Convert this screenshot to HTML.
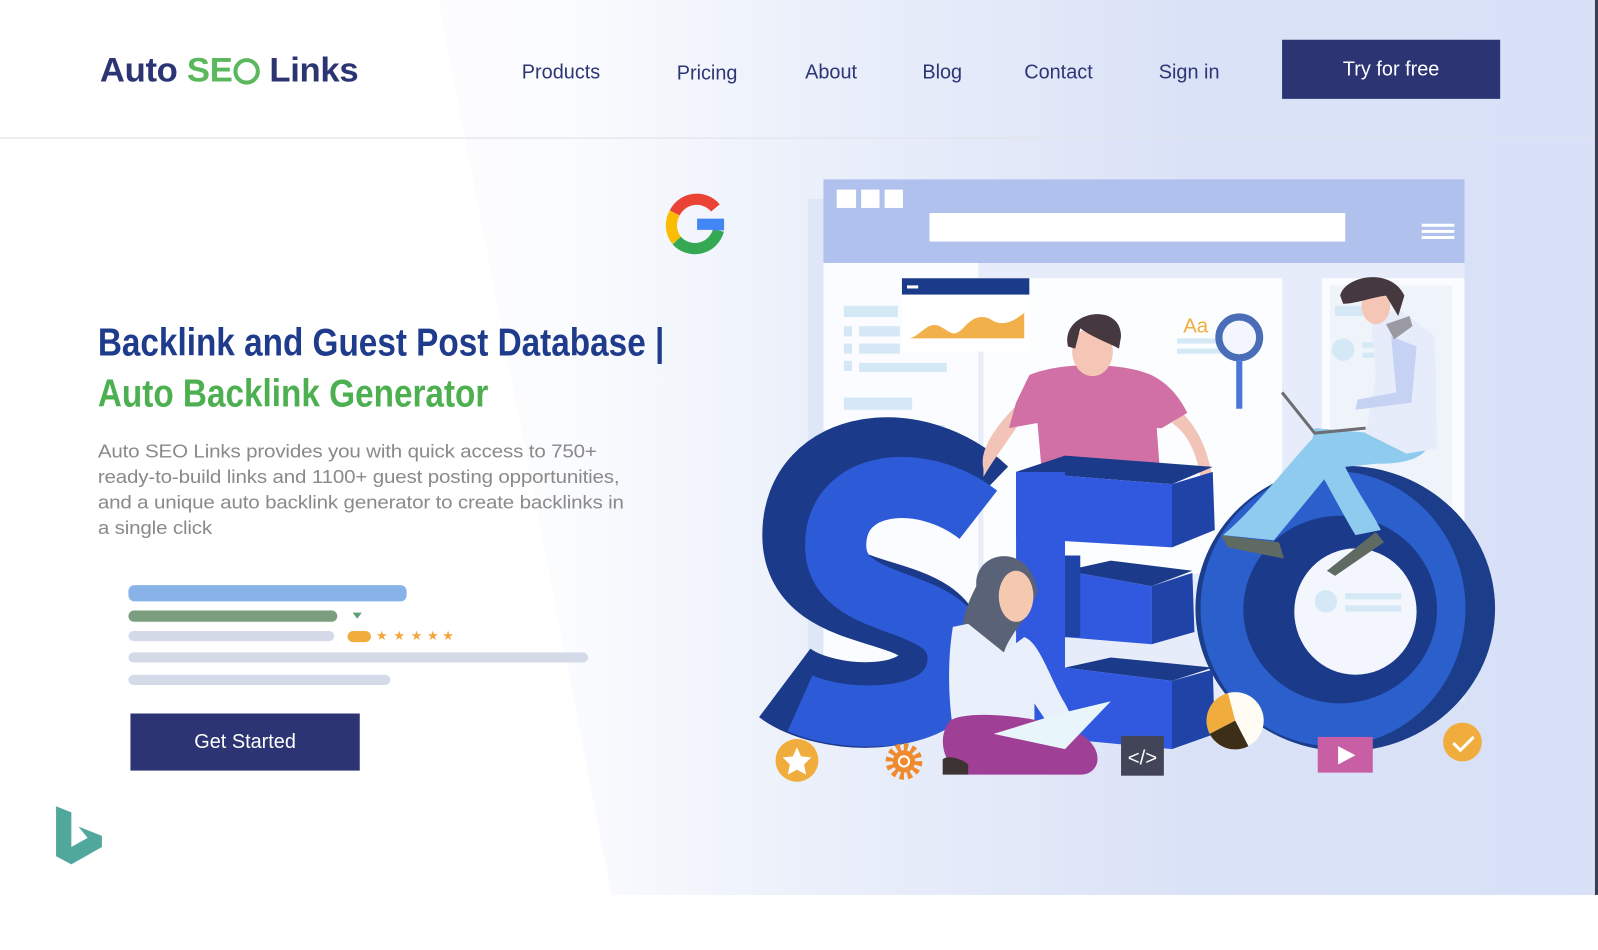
<!DOCTYPE html>
<html><head><meta charset="utf-8">
<style>
html,body{margin:0;padding:0;width:1598px;height:950px;overflow:hidden;background:#fff;}
#w{position:absolute;left:0;top:0;width:1568px;height:932px;transform:scale(1.01913,1.0193);transform-origin:0 0;font-family:"Liberation Sans",sans-serif;}
#bg{position:absolute;left:0;top:0;width:1565px;height:878px;background:linear-gradient(90deg,#fff 0%,#fbfcfe 35%,#eaeffa 52%,#dae2f7 75%,#d8e1f7 100%);}
#edge{position:absolute;left:1565px;top:0;width:3px;height:878px;background:#3a3f55;}
.nav{position:absolute;top:60px;font-size:19.5px;color:#2d3674;}
.btn{position:absolute;background:#2c3474;color:#fff;font-size:19.5px;display:flex;align-items:center;justify-content:center;}
h1{margin:0;position:absolute;left:96px;font-size:38px;font-weight:bold;white-space:nowrap;transform:scaleX(0.86);transform-origin:0 0;}
.p{position:absolute;left:96px;top:430px;font-size:18.5px;line-height:25px;color:#8a8a8a;white-space:nowrap;letter-spacing:-0.15px;transform:scaleX(1.09);transform-origin:0 0;}
.bar{position:absolute;border-radius:6px;}
</style></head><body>
<div id="w">
<div id="bg"></div>
<svg style="position:absolute;left:0;top:0" width="1568" height="932">
<polygon points="0,0 430,0 600,878 0,878" fill="#fff"/>
<line x1="0" y1="135.5" x2="1565" y2="135.5" stroke="#e2e4ea" stroke-width="1.2"/>
<g fill="none" stroke-width="11">
<path d="M702,204 A24,24 0 0 0 662,209" stroke="#ea4335"/>
<path d="M662,209 A24,24 0 0 0 664,236" stroke="#fbbc05"/>
<path d="M664,236 A24,24 0 0 0 705,226" stroke="#34a853"/>
<path d="M705,226 L705,220 L684,220" stroke="#4285f4"/>
</g>
<path d="M55,791 L70,797 L70,831 L86,822 L77,811 L100,820 L100,831 L70,848 L55,840 Z" fill="#4fa89b"/>
<rect x="793" y="195" width="20" height="470" fill="#dfe6f8"/>
<rect x="808" y="258" width="629" height="430" fill="#e6ecfa"/>
<rect x="808" y="176" width="629" height="82" fill="#afc1ec"/>
<rect x="821" y="186" width="19" height="18" fill="#fff"/><rect x="845" y="186" width="18" height="18" fill="#fff"/><rect x="868" y="186" width="18" height="18" fill="#fff"/>
<rect x="912" y="209" width="408" height="28" fill="#fff"/>
<g stroke="#fff" stroke-width="3"><line x1="1395" y1="221" x2="1427" y2="221"/><line x1="1395" y1="227" x2="1427" y2="227"/><line x1="1395" y1="233" x2="1427" y2="233"/></g>
<rect x="808" y="258" width="152" height="400" fill="#fbfcff"/>
<rect x="965" y="273" width="293" height="290" fill="#fcfdff"/>
<rect x="1297" y="273" width="140" height="300" fill="#fbfcff"/>
<rect x="1305" y="280" width="120" height="260" fill="#eef4fa"/>
<g fill="#d4e8f5"><rect x="828" y="300" width="53" height="11"/><rect x="828" y="320" width="8" height="10"/><rect x="843" y="320" width="40" height="10"/><rect x="828" y="337" width="8" height="10"/><rect x="843" y="337" width="40" height="10"/><rect x="828" y="354" width="8" height="10"/><rect x="843" y="356" width="86" height="9"/><rect x="828" y="390" width="67" height="12"/><rect x="828" y="417" width="9" height="8"/><rect x="845" y="417" width="82" height="8"/>
<rect x="1155" y="332" width="55" height="5"/><rect x="1155" y="342" width="55" height="5"/><rect x="1310" y="300" width="28" height="10"/><circle cx="1318" cy="343" r="11"/><rect x="1337" y="336" width="35" height="5"/><rect x="1337" y="346" width="35" height="5"/></g>
<rect x="885" y="273" width="125" height="72" fill="#fff"/>
<rect x="885" y="273" width="125" height="16" fill="#1a3a8a"/>
<rect x="890" y="280" width="11" height="3" fill="#fff"/>
<path d="M893,332 C905,328 910,315 922,320 C932,325 935,332 945,322 C955,310 965,308 975,315 C985,320 995,315 1005,307 L1005,332 Z" fill="#f2b04a"/>
<text x="1161" y="326" font-size="20" fill="#f0ad3d" font-family="Liberation Sans">Aa</text>
<circle cx="1216" cy="331" r="20" fill="#f3f6fd" stroke="#4a6db8" stroke-width="7"/>
<rect x="1213" y="353" width="6" height="48" fill="#4b76d8"/>
<ellipse cx="1320" cy="597" rx="147" ry="140" fill="#1b3d8a"/>
<ellipse cx="1308" cy="597" rx="130" ry="135" fill="#2b5fcb"/>
<ellipse cx="1315" cy="598" rx="95" ry="92" fill="#1b3a8a"/>
<ellipse cx="1330" cy="600" rx="60" ry="62" fill="#f3f7fd"/>
<circle cx="1301" cy="590" r="11" fill="#d4e8f5"/><rect x="1320" y="582" width="55" height="6" fill="#d4e8f5"/><rect x="1320" y="594" width="55" height="6" fill="#d4e8f5"/>
<path d="M960,488 C900,430 790,440 790,525 C790,610 930,575 925,645 C920,705 810,700 770,670" fill="none" stroke="#1b3a8a" stroke-width="84"/>
<path d="M960,505 C905,462 820,470 820,535 C820,605 945,580 940,650 C935,712 830,710 785,690" fill="none" stroke="#2d5bd8" stroke-width="60"/>
<path d="M965,460 C960,440 980,415 1000,395 L1010,400 C995,425 975,450 965,468 Z" fill="#f2c4b8"/>
<path d="M1160,405 C1175,420 1185,440 1190,470 L1178,470 C1175,445 1165,425 1150,415 Z" fill="#f2c4b8"/>
<path d="M1010,368 C1040,355 1100,355 1130,368 C1150,378 1160,395 1165,405 L1140,420 L1135,420 L1138,460 L1022,460 L1018,415 L990,420 L997,395 Z" fill="#d170a4"/>
<ellipse cx="1072" cy="345" rx="20" ry="24" fill="#f5c6b6"/>
<path d="M1048,340 C1040,305 1100,295 1100,330 L1098,342 C1085,335 1070,330 1060,322 L1055,342 Z" fill="#45383f"/>
<polygon points="997,463 1045,447 1190,458 1150,475" fill="#1b3a8a"/>
<rect x="997" y="463" width="48" height="260" fill="#3159df"/>
<polygon points="997,463 1150,475 1150,537 997,528" fill="#3159df"/>
<polygon points="1150,475 1190,463 1192,520 1150,537" fill="#2043a8"/>
<polygon points="1045,560 1090,550 1170,560 1130,575" fill="#1b3a8a"/>
<polygon points="1045,560 1130,575 1130,632 1045,625" fill="#3159df"/>
<polygon points="1130,575 1170,562 1172,620 1130,632" fill="#2043a8"/>
<polygon points="1045,625 1045,545 1060,545 1060,625" fill="#2043a8"/>
<polygon points="1045,655 1090,645 1190,655 1150,668" fill="#1b3a8a"/>
<polygon points="1045,655 1150,668 1150,735 1045,725" fill="#3159df"/>
<polygon points="1150,668 1190,657 1192,720 1150,735" fill="#2043a8"/>
<path d="M1200,525 C1230,500 1260,460 1290,428 L1330,432 C1300,470 1275,500 1250,530 Z" fill="#8ecbee"/>
<path d="M1290,420 L1405,430 C1400,450 1380,455 1350,455 L1320,458 C1330,480 1345,500 1355,520 L1330,525 C1315,500 1300,470 1285,445 Z" fill="#8ecbee"/>
<path d="M1198,525 L1255,532 L1260,548 L1205,537 Z" fill="#5f6b62"/>
<path d="M1302,560 L1350,522 L1358,532 L1310,565 Z" fill="#5f6b62"/>
<path d="M1345,308 L1375,305 L1408,330 L1410,440 L1380,445 L1340,425 L1350,370 Z" fill="#e6ecfa"/>
<path d="M1365,330 L1390,340 L1385,395 L1330,402 L1332,392 L1370,385 Z" fill="#c5d2f3"/>
<path d="M1360,318 L1383,310 L1386,320 L1368,333 Z" fill="#9b9aa3"/>
<ellipse cx="1350" cy="300" rx="14" ry="18" fill="#f5c6b6"/>
<path d="M1315,290 C1320,270 1365,262 1378,290 L1372,310 L1360,290 C1345,292 1330,298 1318,298 Z" fill="#45383f"/>
<path d="M1258,385 L1290,425 L1340,420" fill="none" stroke="#6d6d72" stroke-width="3"/>
<path d="M958,575 C955,540 1010,530 1018,580 L1010,600 C1000,615 990,625 985,640 L950,645 C940,620 945,600 958,575 Z" fill="#5a6277"/>
<ellipse cx="997" cy="585" rx="17" ry="25" fill="#f5c9b0"/>
<path d="M935,615 L950,612 L985,640 L1005,625 C1020,630 1030,665 1045,690 L1050,700 L1025,705 L1015,690 L1015,715 L935,715 C930,680 930,645 935,615 Z" fill="#eaf0fb"/>
<path d="M930,710 C935,695 1020,700 1060,720 C1085,735 1080,760 1060,760 L950,760 C925,755 920,725 930,710 Z" fill="#a03f96"/>
<path d="M925,745 C930,740 945,745 950,750 L950,760 L925,760 Z" fill="#3d3333"/>
<path d="M975,720 L1045,735 L1090,688 L1040,700 Z" fill="#e8f5fb"/>
<circle cx="782" cy="746" r="21" fill="#f0ad3d"/>
<polygon points="782,733 786,742 796,743 789,750 791,760 782,755 773,760 775,750 768,743 778,742" fill="#fff"/>
<circle cx="887" cy="747" r="14" fill="none" stroke="#f08a2e" stroke-width="8" stroke-dasharray="4 3.3"/>
<circle cx="887" cy="747" r="11" fill="#f08a2e"/><circle cx="887" cy="747" r="6" fill="#fff"/><circle cx="887" cy="747" r="4" fill="#f08a2e"/>
<rect x="1100" y="722" width="42" height="39" fill="#424458"/>
<text x="1121" y="750" font-size="20" fill="#fff" text-anchor="middle" font-family="Liberation Sans">&lt;/&gt;</text>
<circle cx="1212" cy="707" r="28" fill="#fffdf3"/>
<path d="M1212,707 L1205,680 A28,28 0 0 0 1187,720 Z" fill="#f0ad3d"/>
<path d="M1212,707 L1187,720 A28,28 0 0 0 1225,732 Z" fill="#3d2e17"/>
<rect x="1293" y="723" width="54" height="35" fill="#c85fa4"/>
<polygon points="1313,732 1313,750 1330,741" fill="#fff"/>
<circle cx="1435" cy="728" r="19" fill="#f0ad3d"/>
<path d="M1426,729 L1433,736 L1446,723" fill="none" stroke="#fff" stroke-width="3"/>
<polygon points="346,601 355,601 350.5,607" fill="#5f9e78"/>
<g fill="#f3a63a" font-size="13"><text x="369" y="628">★</text><text x="386" y="628">★</text><text x="403" y="628">★</text><text x="419" y="628">★</text><text x="434" y="628">★</text></g>
</svg>
<div style="position:absolute;left:98px;top:50px;font-size:34px;font-weight:bold;color:#2c3474;white-space:nowrap;letter-spacing:-0.3px">Auto <span style="color:#5cb85c">SE<span style="display:inline-block;width:26px;height:26px;border:4px solid #5cb85c;border-radius:50%;box-sizing:border-box;vertical-align:-3px;margin-left:1px"></span></span> Links</div>
<div class="nav" style="left:512px">Products</div>
<div class="nav" style="left:664px;top:61px">Pricing</div>
<div class="nav" style="left:790px">About</div>
<div class="nav" style="left:905px">Blog</div>
<div class="nav" style="left:1005px">Contact</div>
<div class="nav" style="left:1137px">Sign in</div>
<div class="btn" style="left:1258px;top:39px;width:214px;height:58px">Try for free</div>
<h1 style="top:316px;color:#1f3b8c">Backlink and Guest Post Database |</h1>
<h1 style="top:366px;color:#4caf50">Auto Backlink Generator</h1>
<div class="p">Auto SEO Links provides you with quick access to 750+<br>ready-to-build links and 1100+ guest posting opportunities,<br>and a unique auto backlink generator to create backlinks in<br>a single click</div>
<div class="bar" style="left:126px;top:574px;width:273px;height:16px;background:#88b3e8"></div>
<div class="bar" style="left:126px;top:599px;width:205px;height:11px;background:#7a9e7e"></div>
<div class="bar" style="left:126px;top:619px;width:202px;height:10px;background:#d4dae8"></div>
<div class="bar" style="left:341px;top:619px;width:23px;height:11px;background:#f0ad3d"></div>
<div class="bar" style="left:126px;top:640px;width:451px;height:10px;background:#d4dae8"></div>
<div class="bar" style="left:126px;top:662px;width:257px;height:10px;background:#d4dae8"></div>
<div class="btn" style="left:128px;top:700px;width:225px;height:56px">Get Started</div>
<div id="edge"></div>
</div>
</body></html>
